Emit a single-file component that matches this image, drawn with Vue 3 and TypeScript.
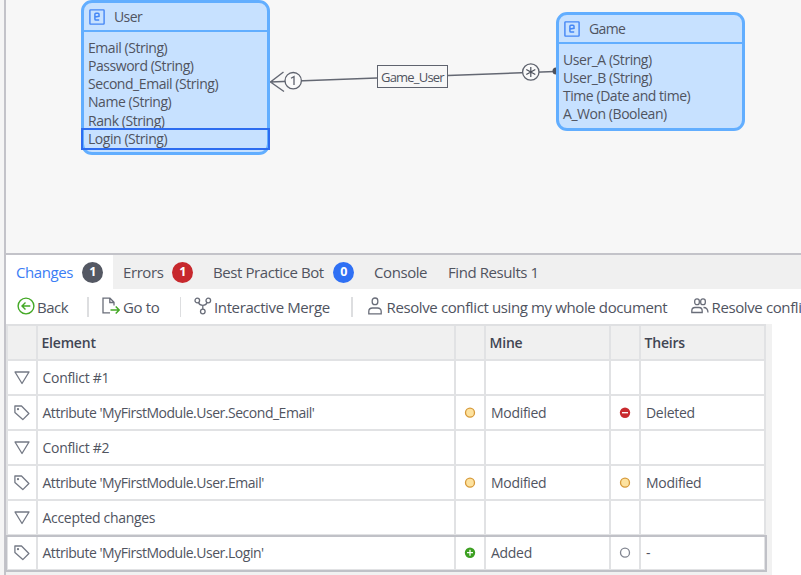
<script setup lang="ts">
interface Entity { name: string; attributes: string[]; selected?: string; cls: string }
interface Row { group?: boolean; label: string; mine?: string; theirs?: string; selected?: boolean }

const entities: Entity[] = [
  {
    name: 'User',
    cls: 'user',
    attributes: ['Email (String)', 'Password (String)', 'Second_Email (String)', 'Name (String)', 'Rank (String)', 'Login (String)'],
    selected: 'Login (String)',
  },
  { name: 'Game', cls: 'game', attributes: ['User_A (String)', 'User_B (String)', 'Time (Date and time)', 'A_Won (Boolean)'] },
]

const rows: Row[] = [
  { group: true, label: 'Conflict #1' },
  { label: "Attribute 'MyFirstModule.User.Second_Email'", mine: 'Modified', theirs: 'Deleted' },
  { group: true, label: 'Conflict #2' },
  { label: "Attribute 'MyFirstModule.User.Email'", mine: 'Modified', theirs: 'Modified' },
  { group: true, label: 'Accepted changes' },
  { label: "Attribute 'MyFirstModule.User.Login'", mine: 'Added', theirs: '-', selected: true },
]
</script>

<template>
  <div class="window">
    <section class="canvas">
      <svg class="links" width="794" height="252" viewBox="6 0 794 252">
        <path d="M270 82 L377 78 M448 75.500 L555 71.500 M283.500 72 L270.500 82 L284 91.500" fill="none" stroke="#646873" stroke-width="1.400" />
        <circle cx="293.200" cy="80.700" r="8.200" fill="#fafafa" stroke="#5f636e" stroke-width="1.300" />
        <path d="M291 78.300 L294 76.700 V85" fill="none" stroke="#5f636e" stroke-width="1.300" />
        <circle cx="530.800" cy="72" r="8.200" fill="#fafafa" stroke="#5f636e" stroke-width="1.300" />
        <path d="M530.800 67 V77 M526.300 69.400 L535.300 74.600 M535.300 69.400 L526.300 74.600" stroke="#4d515c" stroke-width="1.200" />
        <circle cx="556" cy="71" r="3.500" fill="#4d515c" />
      </svg>
      <div class="link-name"><span>Game_User</span></div>
      <article v-for="e in entities" :key="e.name" class="entity" :class="e.cls">
        <header>
          <svg width="16" height="16" viewBox="0 0 16 16" fill="none" stroke="#4486f6">
            <rect x="0.900" y="0.900" width="14.200" height="14.200" rx="0.600" stroke-width="1.400" />
            <path d="M5.900 7.900 L10 7.300 V5.200 Q10 4.200 9 4.200 H6.900 Q5.900 4.200 5.900 5.200 V10 Q5.900 11.100 6.900 11.100 H10.200" stroke-width="1.500" />
          </svg>
          <span>{{ e.name }}</span>
        </header>
        <ul>
          <li v-for="a in e.attributes" :key="a" :class="{ picked: a === e.selected }">{{ a }}</li>
        </ul>
      </article>
    </section>

    <section class="panel">
      <nav class="tabs">
        <div class="tab active"><span>Changes</span><b class="badge dark">1</b></div>
        <div class="tab errors"><span>Errors</span><b class="badge red">1</b></div>
        <div class="tab bot"><span>Best Practice Bot</span><b class="badge blue">0</b></div>
        <div class="tab console"><span>Console</span></div>
        <div class="tab find"><span>Find Results 1</span></div>
      </nav>

      <div class="toolbar">
        <div class="tool back">
          <svg width="18" height="18" viewBox="0 0 18 18" fill="none" stroke="#43a825" stroke-width="1.400">
            <circle cx="9" cy="9" r="7.900" />
            <path d="M13.300 9 H5 M8.500 5.500 L5 9 L8.500 12.500" />
          </svg>
          <span>Back</span>
        </div>
        <i class="sep" />
        <div class="tool goto">
          <svg width="18" height="18" viewBox="0 0 18 18" fill="none" stroke="#696d79" stroke-width="1.300">
            <path d="M8 15.800 H1 V1.200 H8 L12 5.200 V8.500 M7.800 1.200 V5.500 H12" />
            <path d="M8.500 13 H17 M13.700 9.500 L17.200 13 L13.700 16.500" stroke="#43a825" stroke-width="1.500" />
          </svg>
          <span>Go to</span>
        </div>
        <i class="sep" />
        <div class="tool merge">
          <svg width="18" height="18" viewBox="0 0 18 18" fill="none" stroke="#696d79" stroke-width="1.300">
            <circle cx="3.300" cy="3.500" r="2.300" /><circle cx="14.300" cy="3.500" r="2.300" /><circle cx="8.800" cy="14.500" r="2.300" />
            <path d="M4.500 5.500 Q5.500 8.300 8.800 8.300 Q12.100 8.300 13.100 5.500 M8.800 8.300 V12.200" />
          </svg>
          <span>Interactive Merge</span>
        </div>
        <i class="sep" />
        <div class="tool mine">
          <svg width="14" height="18" viewBox="0 0 14 18" fill="none" stroke="#696d79" stroke-width="1.300">
            <rect x="4.200" y="1" width="5.600" height="6.600" rx="2.700" />
            <path d="M0.800 16.800 V14.500 Q0.800 11 4.500 11 H9.500 Q13.200 11 13.200 14.500 V16.800 Z" />
          </svg>
          <span>Resolve conflict using my whole document</span>
        </div>
        <div class="tool theirs">
          <svg width="18" height="16" viewBox="0 0 18 16" fill="none" stroke="#696d79" stroke-width="1.300">
            <rect x="3.700" y="0.900" width="4.600" height="5.800" rx="2.200" />
            <rect x="9.700" y="0.900" width="4.600" height="5.800" rx="2.200" />
            <path d="M0.800 14.500 V13 Q0.800 9.500 4 9.500 H8 Q11.200 9.500 11.200 13 V14.500 Z M12.500 9.500 Q16.800 9.500 17 14.500" />
          </svg>
          <span>Resolve conflict using their whole document</span>
        </div>
      </div>

      <div class="grid-area">
        <div class="grid">
          <div class="row head">
            <div /><div><span>Element</span></div><div /><div><span>Mine</span></div><div /><div><span>Theirs</span></div>
          </div>
          <div v-for="r in rows" :key="r.label" class="row" :class="{ selected: r.selected }">
            <div class="glyph">
              <svg v-if="r.group" width="16" height="14" viewBox="0 0 16 14"><path d="M1 1 H15 L8 12.500 Z" fill="none" stroke="#747985" stroke-width="1.300" stroke-linejoin="round" /></svg>
              <svg v-else width="16" height="16" viewBox="0 0 16 16" fill="none" stroke="#747985" stroke-width="1.300" stroke-linejoin="round">
                <path d="M0.900 1 H7.500 L14.900 8.500 L8.800 14.600 L0.900 7.500 Z" /><circle cx="4" cy="4.200" r="0.500" />
              </svg>
            </div>
            <div :class="{ item: !r.group }"><span>{{ r.label }}</span></div>
            <template v-for="(s, i) in [r.mine, r.theirs]" :key="i">
              <div class="glyph">
                <svg v-if="s" width="12" height="12" viewBox="0 0 12 12" fill="none" stroke-width="1.300">
                  <circle v-if="s === 'Modified'" cx="6" cy="5.700" r="4.500" fill="#fde29f" stroke="#d79a3a" />
                  <g v-else-if="s === 'Deleted'"><circle cx="6" cy="5.700" r="5.200" fill="#c92a2e" /><path d="M3 5.700 H9" stroke="#fff" /></g>
                  <g v-else-if="s === 'Added'"><circle cx="6" cy="5.700" r="5.200" fill="#3da022" /><path d="M3 5.700 H9 M6 2.700 V8.700" stroke="#fff" /></g>
                  <circle v-else cx="6" cy="5.700" r="4.500" fill="#fff" stroke="#818590" />
                </svg>
              </div>
              <div class="state"><span>{{ s }}</span></div>
            </template>
          </div>
        </div>
      </div>
    </section>
  </div>
</template>

<style>
body { margin: 0; overflow: hidden; }
</style>

<style scoped>
.window {
  box-sizing: border-box;
  width: 801px;
  height: 575px;
  overflow: hidden;
  display: flex;
  flex-direction: column;
  border-left: 4px solid #f5f5f5;
  background: #fff;
  color: #50545f;
  font-family: "Open Sans", "Noto Sans", sans-serif;
  font-size: 15px;
}
.canvas {
  position: relative;
  flex: 0 0 253px;
  border-left: 2px solid #c3c3c9;
  background: #f7f7f7;
}
.links { position: absolute; left: 0; top: 0; }
.link-name {
  position: absolute;
  left: 371px;
  top: 65px;
  box-sizing: border-box;
  width: 71px;
  height: 23px;
  border: 1px solid #5f636e;
  line-height: 22px;
  font-size: 13px;
  white-space: nowrap;
  padding-left: 3px;
  letter-spacing: -0.800px;
}
.entity {
  position: absolute;
  box-sizing: border-box;
  width: 189px;
  border: 3px solid #62aeff;
  border-radius: 11px;
  background: #c7e1ff;
  font-size: 14px;
}
.user { left: 75px; top: 0; height: 155px; }
.game { left: 550px; top: 12px; height: 119px; }
.entity header {
  display: flex;
  align-items: center;
  gap: 9px;
  height: 27px;
  padding: 0 0 0 5px;
  border-bottom: 2px solid #62aeff;
  letter-spacing: -0.600px;
}
.entity ul {
  margin: 0;
  padding: 6.600px 0 0;
  list-style: none;
}
.entity li {
  height: 18.300px;
  line-height: 18.300px;
  padding-left: 4px;
  letter-spacing: -0.450px;
  white-space: nowrap;
}
.entity li.picked {
  outline: 2px solid #2d6cf0;
  margin: 0 -1px;
  padding-left: 5px;
}
.panel {
  flex: 1;
  min-height: 0;
  border-left: 2px solid #c3c3c9;
  border-top: 2px solid #c3c3c9;
}
.tabs {
  display: flex;
  height: 34px;
  background: #f0f0f0;
}
.tab {
  display: flex;
  align-items: center;
  white-space: nowrap;
  letter-spacing: -0.420px;
}
.tab.active { box-sizing: border-box; width: 107px; padding: 0 10px; background: #fff; color: #3b7df5; justify-content: space-between; }
.badge {
  width: 21px;
  height: 21px;
  border-radius: 50%;
  color: #fff;
  font-size: 12.500px;
  line-height: 20px;
  text-align: center;
}
.dark { background: #545863; }
.red { background: #c7282d; }
.blue { background: #2f70f4; }
.errors { box-sizing: border-box; width: 100px; padding: 0 20px 0 10px; justify-content: space-between; }
.bot { box-sizing: border-box; width: 141px; justify-content: space-between; }
.console { margin-left: 20px; width: 74px; }
.toolbar {
  display: flex;
  align-items: center;
  height: 35px;
  white-space: nowrap;
  letter-spacing: -0.380px;
}
.tool { flex: none; display: flex; align-items: center; box-sizing: border-box; }
.tool svg { position: relative; top: -1px; }
.sep { flex: none; width: 1.500px; height: 20px; background: #dddee0; }
.back { width: 81px; padding-left: 10.500px; gap: 2.500px; letter-spacing: -0.500px; }
.goto { width: 91px; padding-left: 13.500px; gap: 3px; }
.merge { width: 170px; padding-left: 13px; gap: 2px; }
.mine { width: 338px; padding-left: 15px; gap: 5px; }
.theirs { gap: 3px; }
.grid-area {
  width: 766px;
  height: 251px;
  background: #f1f1f1;
}
.grid {
  width: 760px;
  background: #fff;
  border-top: 2px solid #dfe0e2;
}
.row {
  display: grid;
  grid-template-columns: 32px 418px 30px 125px 30px 125px;
  height: 35px;
}
.row > div {
  box-sizing: border-box;
  display: flex;
  align-items: center;
  border-right: 2px solid #e1e2e4;
  border-bottom: 2px solid #e1e2e4;
  padding-left: 4.500px;
  font-size: 14px;
  letter-spacing: -0.300px;
  white-space: nowrap;
}
.row > div:first-child { border-left: 2px solid #e1e2e4; }
.row > div.glyph { justify-content: center; padding: 0; }
.row > div.item { letter-spacing: -0.480px; }
.row > div.state { padding-left: 5px; }
.row.head > div { background: #f0f0f0; font-weight: 600; color: #414553; padding-left: 3.500px; letter-spacing: -0.200px; }
.row.selected { outline: 2px solid #c0c1c7; outline-offset: -1px; }
</style>
